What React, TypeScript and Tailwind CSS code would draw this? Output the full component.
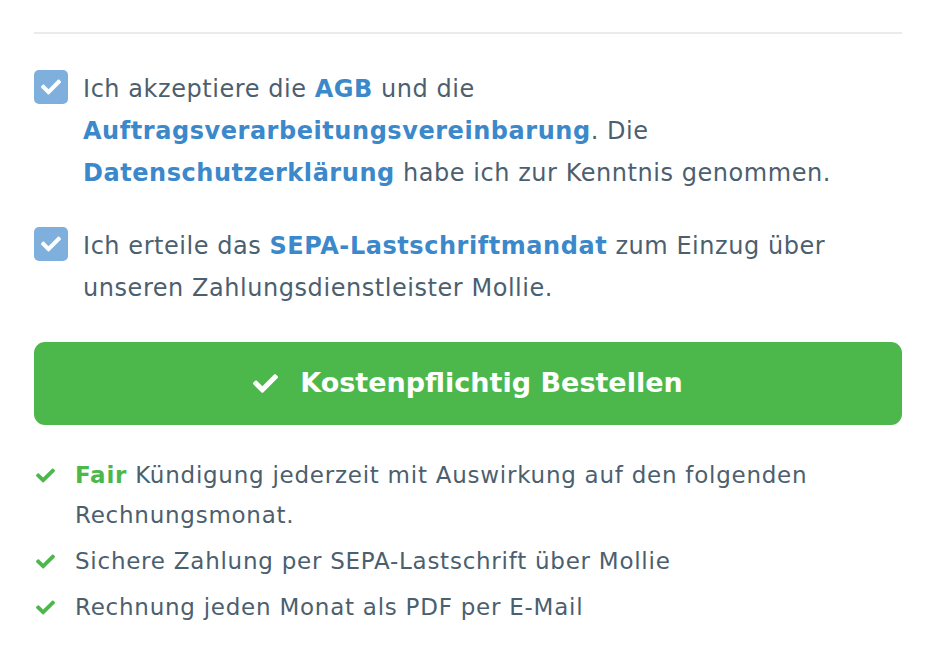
import React from "react";
import { FaCheck } from "react-icons/fa";

const font = { fontFamily: '"DejaVu Sans", "Noto Sans", sans-serif' };

function Box() {
  return (
    <div className="mt-[2px] flex h-[34px] w-[34px] shrink-0 items-center justify-center rounded-[5px] bg-[#7fb0dd]">
      <FaCheck className="h-[20px] w-[20px] text-white" />
    </div>
  );
}

function Item({ children }: { children: React.ReactNode }) {
  return (
    <li className="flex gap-[20px]">
      <FaCheck className="mt-[11px] ml-[2px] h-[19px] w-[19px] shrink-0 text-[#4cb84b]" />
      <span>{children}</span>
    </li>
  );
}

export default function App() {
  return (
    <div className="min-h-[660px] bg-white pl-[34px] pr-[32px] pt-[32px] text-[#4c5f6f]" style={font}>
      <div className="h-[2px] bg-[#e8ecef]" />
      <div className="mt-[34px] flex gap-[15px] text-[24px] leading-[42px] tracking-[0.55px]">
        <Box />
        <p>
          Ich akzeptiere die <a className="font-bold text-[#3b88cb]">AGB</a> und die
          <br />
          <a className="font-bold text-[#3b88cb]">Auftragsverarbeitungsvereinbarung</a>. Die
          <br />
          <a className="font-bold text-[#3b88cb]">Datenschutzerklärung</a> habe ich zur Kenntnis genommen.
        </p>
      </div>
      <div className="mt-[31px] flex gap-[15px] text-[24px] leading-[42px] tracking-[0.55px]">
        <Box />
        <p>
          Ich erteile das <a className="font-bold text-[#3b88cb]">SEPA-Lastschriftmandat</a> zum Einzug über
          <br />
          unseren Zahlungsdienstleister Mollie.
        </p>
      </div>
      <button className="mt-[33px] flex h-[83px] w-full items-center justify-center gap-[22px] rounded-[11px] bg-[#4cb84b] text-[27px] font-bold text-white">
        <FaCheck className="h-[25px] w-[25px]" />
        <span>Kostenpflichtig Bestellen</span>
      </button>
      <ul className="mt-[30px] flex flex-col gap-[6px] text-[23px] leading-[40px] tracking-[0.75px]">
        <Item>
          <b className="font-bold text-[#4cb84b]">Fair</b> Kündigung jederzeit mit Auswirkung auf den folgenden
          <br />
          Rechnungsmonat.
        </Item>
        <Item>Sichere Zahlung per SEPA-Lastschrift über Mollie</Item>
        <Item>Rechnung jeden Monat als PDF per E-Mail</Item>
      </ul>
    </div>
  );
}
